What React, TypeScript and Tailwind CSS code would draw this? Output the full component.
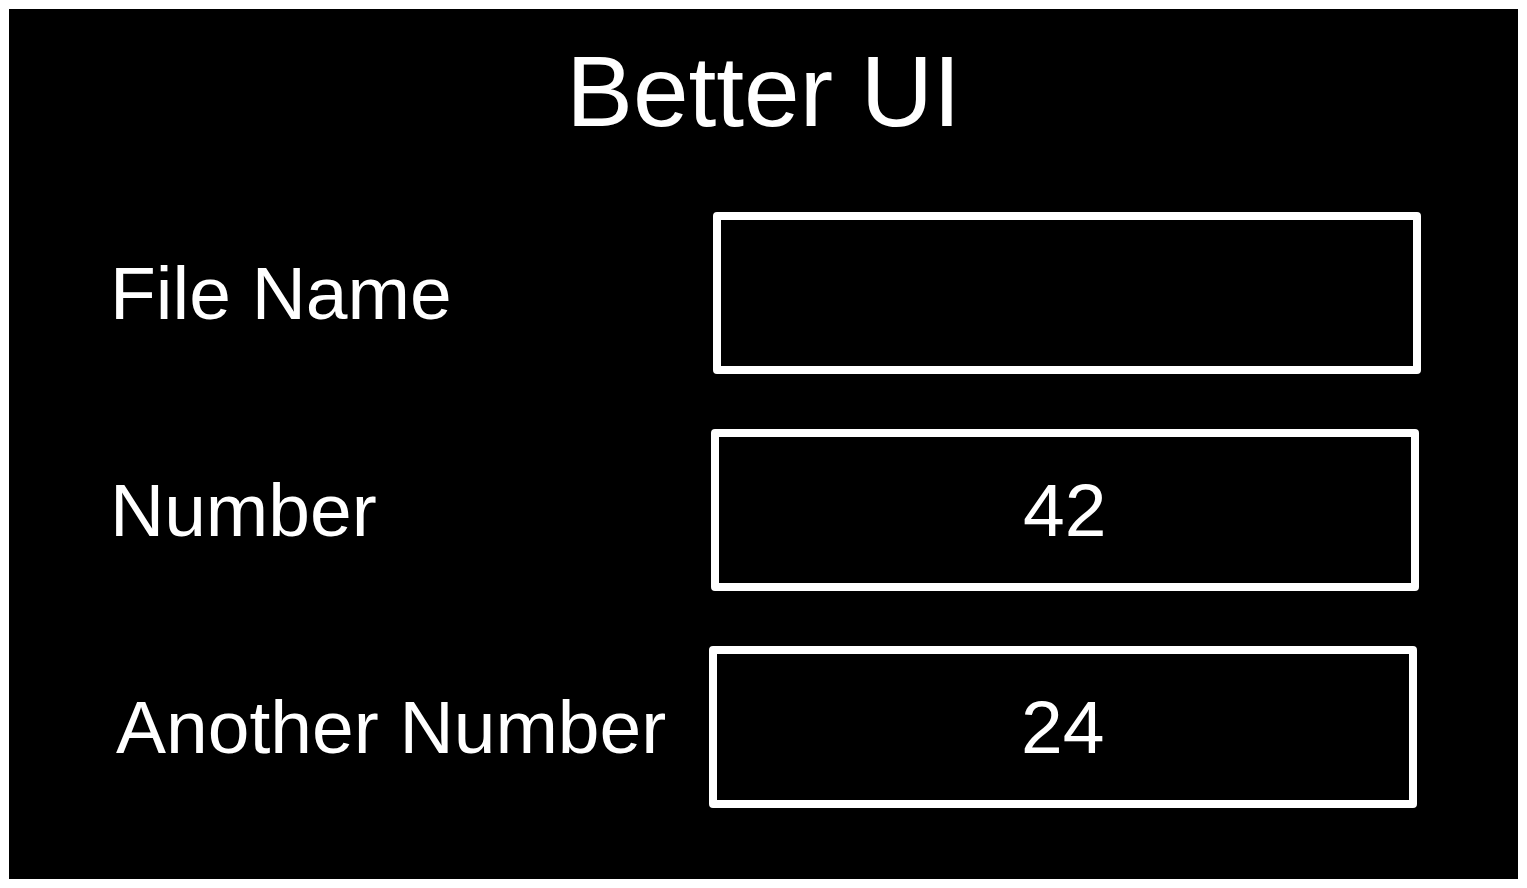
type FieldProps = { id: string; label: string; value?: string; rowClass?: string; labelClass?: string };

function Field({ id, label, value = "", rowClass = "", labelClass = "" }: FieldProps) {
  return (
    <div className={`flex items-center justify-between ${rowClass}`}>
      <label htmlFor={id} className={`whitespace-nowrap text-[75px] leading-[84px] ${labelClass}`}>
        {label}
      </label>
      <input
        id={id}
        type="text"
        defaultValue={value}
        className="h-[162px] w-[54%] shrink-0 rounded-[4px] border-8 border-white bg-black text-center text-[75px] leading-[84px] text-white outline-none"
      />
    </div>
  );
}

export default function App() {
  return (
    <div className="flex min-h-screen bg-white p-[9px] font-['Liberation_Sans',Arial,sans-serif]">
      <main className="flex-1 bg-black text-white">
        <h1 className="pt-[26px] text-center text-[100px] leading-[112px]">Better UI</h1>
        <form className="mt-[65px] flex flex-col gap-[55px]">
          <Field id="file-name" label="File Name" rowClass="ml-[100px] mr-[97px]" labelClass="pl-px" />
          <Field id="number" label="Number" value="42" rowClass="ml-[98px] mr-[99px]" labelClass="pl-[3px]" />
          <Field id="another-number" label="Another Number" value="24" rowClass="ml-[96px] mr-[101px]" labelClass="pl-[11px]" />
        </form>
      </main>
    </div>
  );
}
